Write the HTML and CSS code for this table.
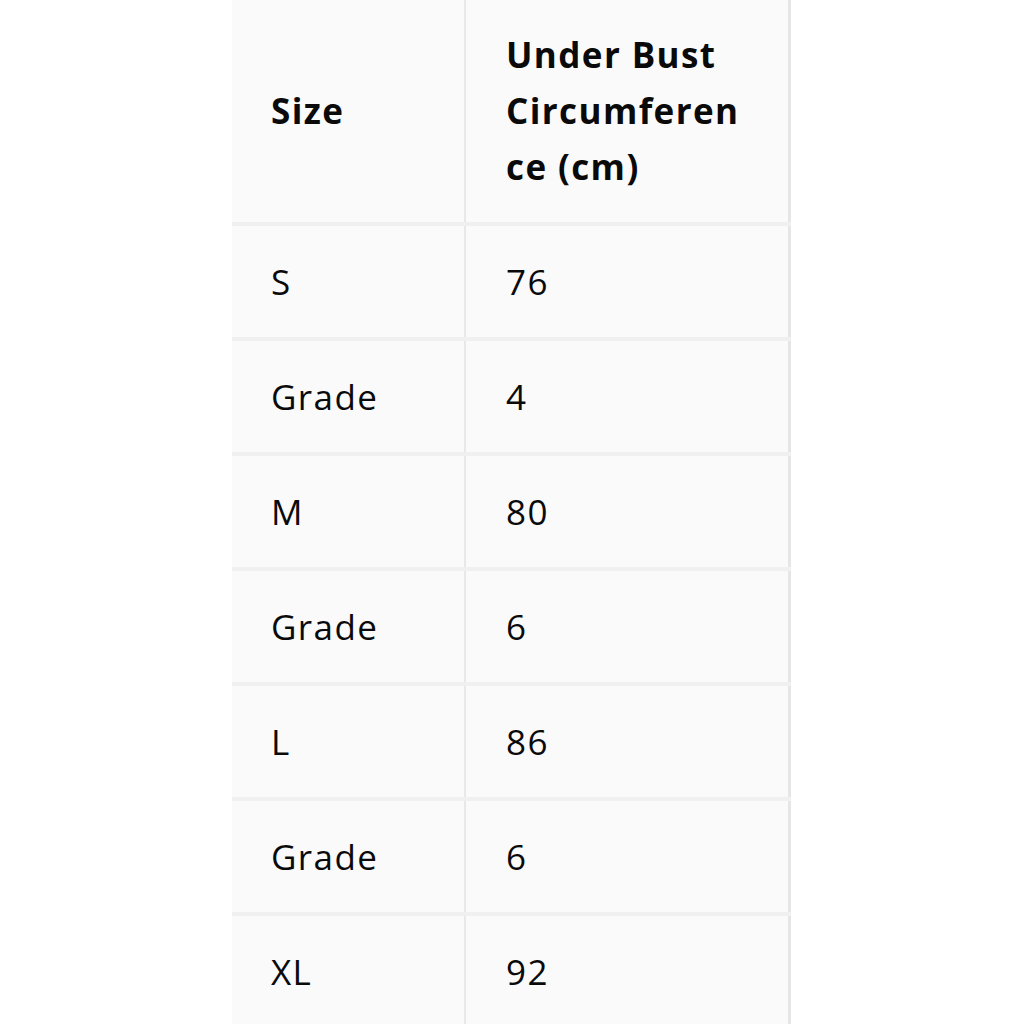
FILE: index.html
```html
<!DOCTYPE html>
<html>
<head>
<meta charset="utf-8">
<link rel="stylesheet" href="styles.css">
</head>
<body>
<div class="page">
  <table class="sizes">
    <thead>
      <tr>
        <th class="c1">Size</th>
        <th class="c2">Under Bust Circumference (cm)</th>
      </tr>
    </thead>
    <tbody>
      <tr><td class="c1">S</td><td class="c2">76</td></tr>
      <tr><td class="c1">Grade</td><td class="c2">4</td></tr>
      <tr><td class="c1">M</td><td class="c2">80</td></tr>
      <tr><td class="c1">Grade</td><td class="c2">6</td></tr>
      <tr><td class="c1">L</td><td class="c2">86</td></tr>
      <tr><td class="c1">Grade</td><td class="c2">6</td></tr>
      <tr><td class="c1">XL</td><td class="c2">92</td></tr>
    </tbody>
  </table>
</div>
</body>
</html>
```
FILE: styles.css
```css
html, body {
  margin: 0;
  padding: 0;
  background: #ffffff;
}
.page {
  width: 1024px;
  height: 1024px;
  overflow: hidden;
  padding-left: 232px;
  box-sizing: border-box;
}
.sizes {
  border-collapse: collapse;
  table-layout: fixed;
  width: 559px;
  background: #fafafa;
  font-family: "Open Sans", "Noto Sans", sans-serif;
  color: #0a0a0a;
  font-size: 35px;
  letter-spacing: 1.4px;
  border-right: 3px solid #e6e6e6;
}
.sizes th, .sizes td {
  text-align: left;
  vertical-align: middle;
  padding: 0;
}
.sizes th {
  height: 222px;
  font-weight: 700;
  line-height: 56px;
  border-bottom: 4px solid #f0f0f0;
}
.sizes td {
  height: 111px;
  font-weight: 400;
  border-bottom: 4px solid #f0f0f0;
}
.c1 {
  width: 193px;
  padding-left: 39px !important;
  border-right: 2px solid #e8e8e8;
}
.c2 {
  padding-left: 40px !important;
  padding-right: 42px !important;
}
.sizes th.c2 {
  overflow-wrap: anywhere;
}
```
